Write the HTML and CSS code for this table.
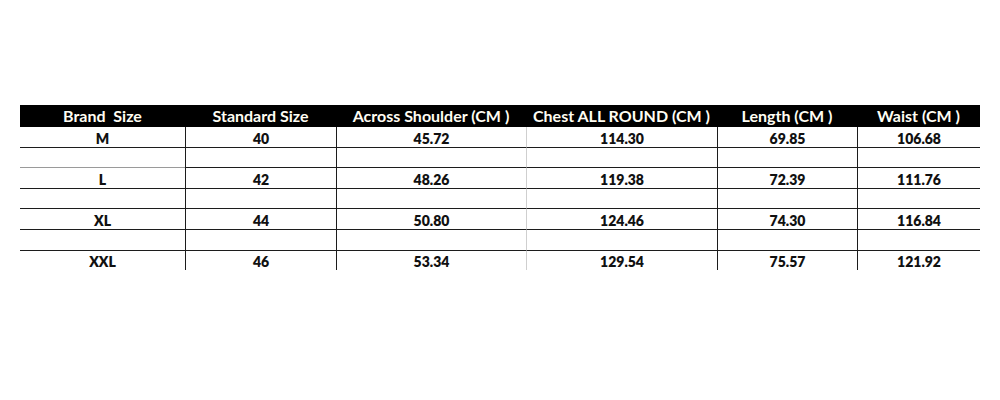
FILE: index.html
```html
<!DOCTYPE html>
<html>
<head>
<meta charset="utf-8">
<title>Size Chart</title>
<link rel="stylesheet" href="styles.css">
</head>
<body>
<table class="chart">
  <colgroup>
    <col class="c1"><col class="c2"><col class="c3"><col class="c4"><col class="c5"><col class="c6">
  </colgroup>
  <thead>
    <tr class="head">
      <th>Brand&nbsp; Size</th>
      <th>Standard Size</th>
      <th>Across Shoulder (CM )</th>
      <th>Chest ALL ROUND (CM )</th>
      <th>Length (CM )</th>
      <th>Waist (CM )</th>
    </tr>
  </thead>
  <tbody>
    <tr class="data r21"><td>M</td><td>40</td><td class="soft">45.72</td><td>114.30</td><td>69.85</td><td>106.68</td></tr>
    <tr class="gap r20"><td class="faint"></td><td></td><td class="soft"></td><td></td><td></td><td></td></tr>
    <tr class="data r21"><td>L</td><td>42</td><td class="soft">48.26</td><td>119.38</td><td>72.39</td><td>111.76</td></tr>
    <tr class="gap r20"><td></td><td></td><td class="soft"></td><td></td><td></td><td></td></tr>
    <tr class="data r21"><td>XL</td><td>44</td><td class="soft">50.80</td><td>124.46</td><td>74.30</td><td>116.84</td></tr>
    <tr class="gap r21"><td></td><td></td><td class="soft"></td><td></td><td></td><td></td></tr>
    <tr class="data last r19"><td>XXL</td><td>46</td><td class="soft">53.34</td><td>129.54</td><td>75.57</td><td>121.92</td></tr>
  </tbody>
</table>
</body>
</html>
```
FILE: styles.css
```css
html, body {
  margin: 0;
  padding: 0;
  background: #ffffff;
}

body {
  padding-top: 105px;
  padding-left: 20px;
  font-family: "Lato", "Open Sans", "Liberation Sans", sans-serif;
}

.chart {
  border-collapse: separate;
  border-spacing: 0;
  table-layout: fixed;
  width: 960px;
}

.c1 { width: 165px; }
.c2 { width: 151px; }
.c3 { width: 190px; }
.c4 { width: 191px; }
.c5 { width: 140px; }
.c6 { width: 123px; }

.head th {
  background: #000000;
  color: #fffdf3;
  font-size: 16px;
  font-weight: 700;
  height: 22px;
  padding: 0;
  line-height: 22px;
  text-align: center;
  white-space: nowrap;
  box-sizing: border-box;
}

tbody td {
  padding: 0;
  text-align: center;
  font-size: 14px;
  font-weight: 800;
  color: #111111;
  box-sizing: border-box;
  border-bottom: 1px solid #1c1c1c;
  border-left: 1px solid #1c1c1c;
  line-height: 16px;
  vertical-align: middle;
  padding-top: 3px;
}

tbody td:first-child {
  border-left: none;
}

tbody td.soft + td {
  border-left-color: #cfcfcf;
}

tbody td.faint {
  border-bottom-color: #9a9a9a;
}

.r21 td { height: 21px; }
.r20 td { height: 20px; }
.r19 td { height: 19px; }

tbody tr.last td {
  border-bottom: none;
}
```
